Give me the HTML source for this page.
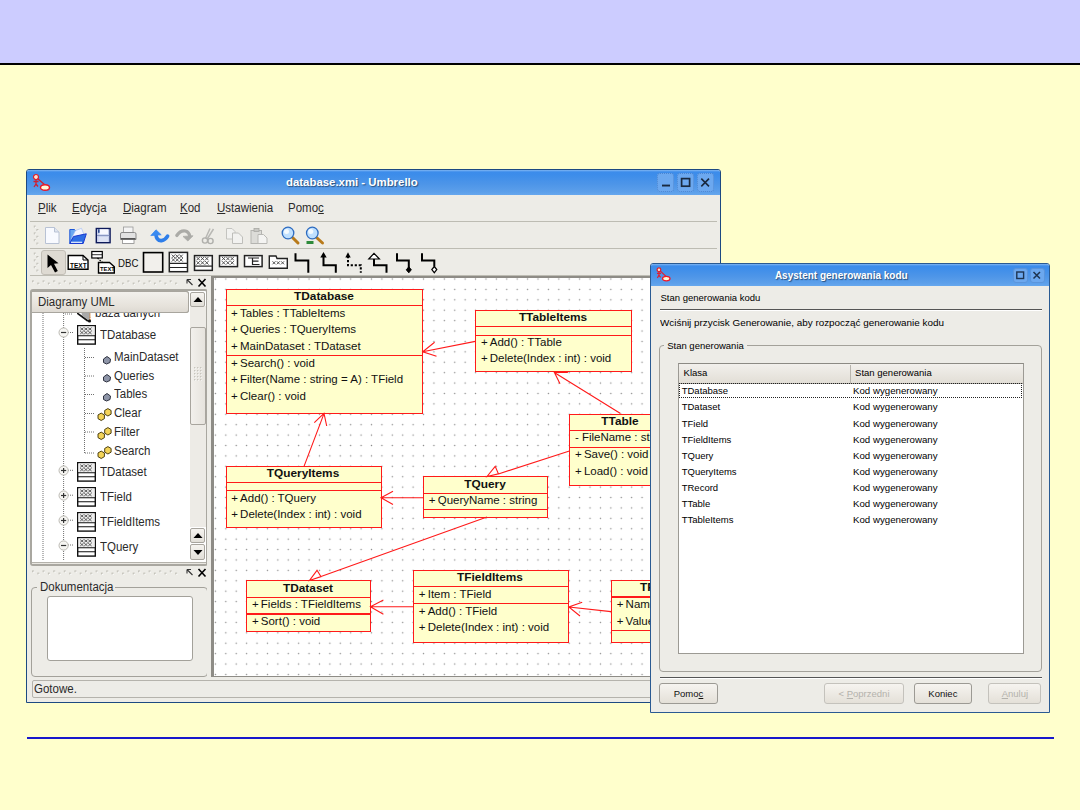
<!DOCTYPE html><html><head><meta charset="utf-8"><style>
*{margin:0;padding:0;box-sizing:border-box}
html,body{width:1080px;height:810px;overflow:hidden;background:#FFFFCC;font-family:"Liberation Sans",sans-serif;color:#000}
.a{position:absolute}
.tx{white-space:nowrap}
svg{position:absolute;overflow:visible}
</style></head><body>
<div class="a" style="left:0px;top:0px;width:1080px;height:63px;background:#CCCCFF"></div>
<div class="a" style="left:0px;top:63px;width:1080px;height:2px;background:#000"></div>
<div class="a" style="left:27px;top:737px;width:1027px;height:2px;background:#1818CC"></div>
<div class="a" style="left:26px;top:169px;width:695px;height:534px;background:#EDECE7;border:1px solid #1D4A82;border-radius:3px 3px 0 0"></div>
<div class="a" style="left:27px;top:170px;width:693px;height:25px;background:linear-gradient(#80B6F2 0,#3C8CEB 2px,#3D8DEA 5px,#4D95E8 14px,#5C9FEA 22px,#66A7EE 25px);border-radius:2px 2px 0 0"></div>
<div class="a tx" style="left:286.0px;top:176.9px;font-size:11.4px;line-height:1;color:#fff;font-weight:bold;text-shadow:1px 1px 1px #2A4F7A">database.xmi - Umbrello</div>
<div class="a" style="left:656.7px;top:173.3px;width:17.5px;height:18.5px;background:#6CA8EF;border:1px dotted #4A84D0;border-radius:3px"></div>
<div class="a" style="left:676.7px;top:173.3px;width:17.5px;height:18.5px;background:#6CA8EF;border:1px dotted #4A84D0;border-radius:3px"></div>
<div class="a" style="left:696.7px;top:173.3px;width:17.5px;height:18.5px;background:#6CA8EF;border:1px dotted #4A84D0;border-radius:3px"></div>
<svg style="left:650px;top:170px" width="70" height="25"><rect x="12" y="14.6" width="8" height="1.9" fill="#1A2A40"/><rect x="31.6" y="8.6" width="8" height="7.6" fill="none" stroke="#1A2A40" stroke-width="1.7"/><path d="M51.3 8.6 L59 16.4 M59 8.6 L51.3 16.4" stroke="#1A2A40" stroke-width="1.6"/></svg>
<svg style="left:33px;top:174px" width="20" height="20" viewBox="0 0 20 20"><g transform="scale(1.0)"><circle cx="3" cy="3" r="2.5" fill="#FFE0D0" stroke="#E0202A" stroke-width="1.2"/><path d="M3 5.5 V10 M0.5 7.5 H5.5 M3 10 L1 13 M3 10 L5 12.5 M4.5 4.5 L12 11" stroke="#D02030" stroke-width="1.3" fill="none"/><ellipse cx="12" cy="13.5" rx="4.5" ry="2.8" fill="#FFF8D8" stroke="#E81828" stroke-width="1.4"/></g></svg>
<div class="a tx" style="left:37.7px;top:202.0px;font-size:12.5px;line-height:1;color:#2A2A2A;transform:scaleX(0.92);transform-origin:0 0;"><u>P</u>lik</div>
<div class="a tx" style="left:72.4px;top:202.0px;font-size:12.5px;line-height:1;color:#2A2A2A;transform:scaleX(0.92);transform-origin:0 0;"><u>E</u>dycja</div>
<div class="a tx" style="left:122.7px;top:202.0px;font-size:12.5px;line-height:1;color:#2A2A2A;transform:scaleX(0.92);transform-origin:0 0;"><u>D</u>iagram</div>
<div class="a tx" style="left:180.4px;top:202.0px;font-size:12.5px;line-height:1;color:#2A2A2A;transform:scaleX(0.92);transform-origin:0 0;"><u>K</u>od</div>
<div class="a tx" style="left:216.7px;top:202.0px;font-size:12.5px;line-height:1;color:#2A2A2A;transform:scaleX(0.92);transform-origin:0 0;"><u>U</u>stawienia</div>
<div class="a tx" style="left:288.1px;top:202.0px;font-size:12.5px;line-height:1;color:#2A2A2A;transform:scaleX(0.92);transform-origin:0 0;">Pomo<u>c</u></div>
<div class="a" style="left:30px;top:221px;width:687px;height:1px;background:#BDBCB3"></div>
<div class="a" style="left:30px;top:248px;width:687px;height:1px;background:#BDBCB3"></div>
<div class="a" style="left:30px;top:275px;width:687px;height:1px;background:#BDBCB3"></div>
<svg style="left:33px;top:225px" width="7" height="22"><rect x="0.8" y="0.6" width="2" height="2" fill="#C2C0B8"/><rect x="1.8" y="1.6" width="1.3" height="1.3" fill="#FBFBFA"/><rect x="3.4000000000000004" y="4.0" width="2" height="2" fill="#C2C0B8"/><rect x="4.4" y="5.0" width="1.3" height="1.3" fill="#FBFBFA"/><rect x="0.8" y="7.3999999999999995" width="2" height="2" fill="#C2C0B8"/><rect x="1.8" y="8.4" width="1.3" height="1.3" fill="#FBFBFA"/><rect x="3.4000000000000004" y="10.799999999999999" width="2" height="2" fill="#C2C0B8"/><rect x="4.4" y="11.799999999999999" width="1.3" height="1.3" fill="#FBFBFA"/><rect x="0.8" y="14.2" width="2" height="2" fill="#C2C0B8"/><rect x="1.8" y="15.2" width="1.3" height="1.3" fill="#FBFBFA"/><rect x="3.4000000000000004" y="17.6" width="2" height="2" fill="#C2C0B8"/><rect x="4.4" y="18.6" width="1.3" height="1.3" fill="#FBFBFA"/></svg>
<svg style="left:33px;top:252px" width="7" height="22"><rect x="0.8" y="0.6" width="2" height="2" fill="#C2C0B8"/><rect x="1.8" y="1.6" width="1.3" height="1.3" fill="#FBFBFA"/><rect x="3.4000000000000004" y="4.0" width="2" height="2" fill="#C2C0B8"/><rect x="4.4" y="5.0" width="1.3" height="1.3" fill="#FBFBFA"/><rect x="0.8" y="7.3999999999999995" width="2" height="2" fill="#C2C0B8"/><rect x="1.8" y="8.4" width="1.3" height="1.3" fill="#FBFBFA"/><rect x="3.4000000000000004" y="10.799999999999999" width="2" height="2" fill="#C2C0B8"/><rect x="4.4" y="11.799999999999999" width="1.3" height="1.3" fill="#FBFBFA"/><rect x="0.8" y="14.2" width="2" height="2" fill="#C2C0B8"/><rect x="1.8" y="15.2" width="1.3" height="1.3" fill="#FBFBFA"/><rect x="3.4000000000000004" y="17.6" width="2" height="2" fill="#C2C0B8"/><rect x="4.4" y="18.6" width="1.3" height="1.3" fill="#FBFBFA"/></svg>
<svg style="left:0;top:0" width="1080" height="810"><path d="M45.5 227.5 H54.5 L59 232 V243.5 H45.5 Z" fill="#F8FAFF" stroke="#B8C2D4" stroke-width="1"/><path d="M54.5 227.5 V232 H59" fill="#E0E6F0" stroke="#B8C2D4" stroke-width="1"/><path d="M69.8 229.5 H74.5 L76 231 H79 V243.5 H69.8 Z" fill="#6AA8F0" stroke="#1E58D8" stroke-width="1"/><path d="M71.5 238.5 L75.5 230.5 L81.5 228.3 L84.5 236 Z" fill="#F4F6FF" stroke="#A8C0F0" stroke-width="0.7"/><path d="M69.8 243.5 L73.5 236.5 L86.3 233.8 L83.2 243.5 Z" fill="#2E6EE4" stroke="#1A3AD0" stroke-width="1"/><path d="M71 242.3 H82" stroke="#E8F0FF" stroke-width="1.2"/><rect x="96.3" y="228.5" width="13.8" height="14.2" fill="#C8D0EC" stroke="#0E1A5A" stroke-width="1.4"/><rect x="99.5" y="229.3" width="8.5" height="5" fill="#F8F8FF"/><rect x="98" y="229.3" width="1.6" height="3.5" fill="#2A4A90"/><path d="M97 235.5 H109.5" stroke="#7A88B8" stroke-width="0.8"/><rect x="98.5" y="237" width="9.5" height="5" fill="#DDE2F4"/><rect x="123.5" y="227" width="9.5" height="6" fill="#F4F4F4" stroke="#9A9A9A" stroke-width="0.8"/><path d="M120.5 234 Q120.5 232.5 122 232.5 H134.5 Q136 232.5 136 234 V239.5 H120.5 Z" fill="#E2E2E2" stroke="#8A8A8A" stroke-width="1"/><rect x="122.5" y="239.5" width="11.5" height="4" fill="#fff" stroke="#8A8A8A" stroke-width="0.8"/><rect x="121" y="238" width="14.5" height="1.6" fill="#555"/><path d="M155.8 234 Q156.5 241 161.5 240.6 Q165.5 240 167.6 236.2" fill="none" stroke="#2E7EEA" stroke-width="3.6" stroke-linecap="round"/><path d="M150.8 235.6 L156 229.8 L161.2 234.8 Z" fill="#3A8AF0" stroke="#3A8AF0" stroke-width="0.8" stroke-linejoin="round"/><path d="M176.8 235.5 Q180.5 230 185.5 231 Q189 232 189.8 236" fill="none" stroke="#ABABA7" stroke-width="3.2" stroke-linecap="round"/><path d="M183 236.4 L193 235.8 L187.8 241 Z" fill="#ABABA7" stroke="#ABABA7" stroke-width="0.8" stroke-linejoin="round"/><path d="M210 228.5 L205.5 238.5 M213.5 229 L207.5 238.5" stroke="#B8B8B4" stroke-width="1.5"/><circle cx="205" cy="240.5" r="2.6" fill="none" stroke="#B0B0AC" stroke-width="1.4"/><circle cx="210.5" cy="241" r="2.6" fill="none" stroke="#B0B0AC" stroke-width="1.4"/><path d="M226.5 228.5 H232 L235 231.5 V239 H226.5 Z" fill="#F2F2F0" stroke="#C4C4C0" stroke-width="1"/><path d="M232.5 233 H238.5 L242.5 237 V243.5 H232.5 Z" fill="#F2F2F0" stroke="#BEBEBA" stroke-width="1"/><rect x="251" y="230.5" width="10.5" height="13" fill="#DCDCD8" stroke="#B4B4B0" stroke-width="1"/><rect x="254" y="228.5" width="5" height="3" fill="#C8C8C4" stroke="#A8A8A4" stroke-width="0.8"/><path d="M258 234.5 H263.5 L267 238 V243.5 H258 Z" fill="#F4F4F2" stroke="#B8B8B4" stroke-width="1"/><path d="M292.5 237.5 L298 243" stroke="#B87A1A" stroke-width="3" stroke-linecap="round"/><circle cx="288" cy="233" r="5.8" fill="#BFE0FF" stroke="#2E6CC0" stroke-width="1.3"/><circle cx="286.5" cy="231.5" r="2.5" fill="#F4FAFF"/><path d="M316.5 237.5 L322.5 243" stroke="#B87A1A" stroke-width="3" stroke-linecap="round"/><circle cx="312.3" cy="233" r="5.8" fill="#BFE0FF" stroke="#2E6CC0" stroke-width="1.3"/><circle cx="310.8" cy="231.5" r="2.5" fill="#F4FAFF"/><rect x="306.5" y="241" width="7" height="3" fill="#2E8A3A"/></svg>
<div class="a" style="left:41px;top:250px;width:24.5px;height:24.5px;background:#DEDAD2;border:1px solid #C2BEB6;border-radius:3px"></div>
<svg style="left:0;top:0" width="1080" height="810"><path d="M47.5 254.5 L47.5 268 L51 265 L55 272.5 L57.8 271 L54 263.8 L58.5 263.2 Z" fill="#000"/><path d="M68.2 255.5 H83 L88 260 V269.2 H68.2 Z" fill="#fff" stroke="#000" stroke-width="1.4"/><path d="M83 255.5 V260 H88" fill="none" stroke="#000" stroke-width="1"/><text x="70" y="267.5" font-family="Liberation Sans" font-weight="bold" font-size="6.5" fill="#000">TEXT</text><rect x="91.8" y="251.5" width="10.5" height="6.5" fill="#fff" stroke="#000" stroke-width="1.2"/><path d="M92 254.7 H102" stroke="#000" stroke-width="0.8"/><path d="M97.5 258 L103 263" stroke="#000" stroke-width="1.2" stroke-dasharray="1.6 1.2"/><path d="M98.5 262.5 H109.5 L114.3 266.8 V273 H98.5 Z" fill="#fff" stroke="#000" stroke-width="1.4"/><text x="100" y="271.3" font-family="Liberation Sans" font-weight="bold" font-size="5.8" fill="#000">TEXT</text><rect x="143.5" y="252.6" width="19.2" height="19.4" fill="#F2F0EC" stroke="#000" stroke-width="1.6"/></svg>
<div class="a tx" style="left:118.0px;top:258.2px;font-size:10.5px;line-height:1;color:#111;transform:scaleX(0.92);transform-origin:0 0;">DBC</div>
<svg style="left:0;top:0" width="1080" height="810"><rect x="169.3" y="252.4" width="18.2" height="19.3" fill="#fff" stroke="#222" stroke-width="1.5"/><path d="M171.70000000000002 254.60000000000002 L175.1 258.0 M175.1 254.60000000000002 L171.70000000000002 258.0" stroke="#444" stroke-width="0.9"/><path d="M175.55 254.60000000000002 L178.95 258.0 M178.95 254.60000000000002 L175.55 258.0" stroke="#444" stroke-width="0.9"/><path d="M179.4 254.60000000000002 L182.79999999999998 258.0 M182.79999999999998 254.60000000000002 L179.4 258.0" stroke="#444" stroke-width="0.9"/><path d="M171.70000000000002 258.20000000000005 L175.1 261.6 M175.1 258.20000000000005 L171.70000000000002 261.6" stroke="#444" stroke-width="0.9"/><path d="M175.55 258.20000000000005 L178.95 261.6 M178.95 258.20000000000005 L175.55 261.6" stroke="#444" stroke-width="0.9"/><path d="M179.4 258.20000000000005 L182.79999999999998 261.6 M182.79999999999998 258.20000000000005 L179.4 261.6" stroke="#444" stroke-width="0.9"/><path d="M169.3 263.4 H187.5 M169.3 267.5 H187.5" stroke="#222" stroke-width="1.2"/><rect x="194.5" y="255.6" width="17.8" height="14.8" fill="#fff" stroke="#222" stroke-width="1.5"/><path d="M196.5 256.90000000000003 L199.89999999999998 260.3 M199.89999999999998 256.90000000000003 L196.5 260.3" stroke="#444" stroke-width="0.9"/><path d="M200.8 256.90000000000003 L204.2 260.3 M204.2 256.90000000000003 L200.8 260.3" stroke="#444" stroke-width="0.9"/><path d="M205.1 256.90000000000003 L208.49999999999997 260.3 M208.49999999999997 256.90000000000003 L205.1 260.3" stroke="#444" stroke-width="0.9"/><path d="M196.5 261.1 L199.89999999999998 264.5 M199.89999999999998 261.1 L196.5 264.5" stroke="#444" stroke-width="0.9"/><path d="M200.8 261.1 L204.2 264.5 M204.2 261.1 L200.8 264.5" stroke="#444" stroke-width="0.9"/><path d="M205.1 261.1 L208.49999999999997 264.5 M208.49999999999997 261.1 L205.1 264.5" stroke="#444" stroke-width="0.9"/><path d="M194.5 266.1 H212.3" stroke="#222" stroke-width="1.2"/><rect x="219.5" y="255.6" width="18" height="11" fill="#fff" stroke="#222" stroke-width="1.5"/><path d="M221.9 256.90000000000003 L225.29999999999998 260.3 M225.29999999999998 256.90000000000003 L221.9 260.3" stroke="#444" stroke-width="0.9"/><path d="M226.20000000000002 256.90000000000003 L229.6 260.3 M229.6 256.90000000000003 L226.20000000000002 260.3" stroke="#444" stroke-width="0.9"/><path d="M230.5 256.90000000000003 L233.89999999999998 260.3 M233.89999999999998 256.90000000000003 L230.5 260.3" stroke="#444" stroke-width="0.9"/><path d="M221.9 261.1 L225.29999999999998 264.5 M225.29999999999998 261.1 L221.9 264.5" stroke="#444" stroke-width="0.9"/><path d="M226.20000000000002 261.1 L229.6 264.5 M229.6 261.1 L226.20000000000002 264.5" stroke="#444" stroke-width="0.9"/><path d="M230.5 261.1 L233.89999999999998 264.5 M233.89999999999998 261.1 L230.5 264.5" stroke="#444" stroke-width="0.9"/><rect x="244.5" y="255.6" width="17.6" height="11" fill="#fff" stroke="#222" stroke-width="1.5"/><path d="M248 258 H259 M252.5 258 V264.5 H259.5 M252.5 261.2 H258.5" stroke="#222" stroke-width="1.2" fill="none"/><path d="M269.3 256 H276 L277 258.5 H287.3 V268.3 H269.3 Z" fill="#fff" stroke="#222" stroke-width="1.4"/><path d="M272.5 261.3 L275.5 264.3 M275.5 261.3 L272.5 264.3" stroke="#444" stroke-width="0.9"/><path d="M276.8 261.3 L279.8 264.3 M279.8 261.3 L276.8 264.3" stroke="#444" stroke-width="0.9"/><path d="M281.1 261.3 L284.1 264.3 M284.1 261.3 L281.1 264.3" stroke="#444" stroke-width="0.9"/></svg>
<svg style="left:0;top:0" width="1080" height="810"><path d="M295.5 253.3 V260.6 H308.3 V272.7" fill="none" stroke="#000" stroke-width="2"/><path d="M323.5 255.5 V265.3 H335.8 V272.7" fill="none" stroke="#000" stroke-width="2"/><path d="M320.3 257.5 L323.5 252 L326.7 257.5 Z" fill="#000"/><path d="M348 256 V265.3 H360.8 V272.7" fill="none" stroke="#000" stroke-width="2" stroke-dasharray="2.2 1.8"/><path d="M345.3 257.5 L348 252.3 L350.7 257.5 Z" fill="#000"/><path d="M374 259 V265.3 H386.5 V272.7" fill="none" stroke="#000" stroke-width="2"/><path d="M368.8 259 L374 253.3 L379.4 259 Z" fill="#fff" stroke="#000" stroke-width="1.2"/><path d="M397 253.3 V260.6 H408.8 V268" fill="none" stroke="#000" stroke-width="2"/><path d="M408.8 266.8 L411.3 269.8 L408.8 272.8 L406.3 269.8 Z" fill="#000" stroke="#000" stroke-width="1"/><path d="M422 253.3 V260.6 H434.3 V266.5" fill="none" stroke="#000" stroke-width="2"/><path d="M434.3 266.5 L436.8 269.6 L434.3 272.7 L431.8 269.6 Z" fill="#fff" stroke="#000" stroke-width="1.2"/></svg>
<svg style="left:32px;top:280px" width="150" height="6"><rect x="0.0" y="0.4" width="2" height="1.8" fill="#C4C2BA"/><rect x="1.1" y="1.5" width="1.3" height="1.3" fill="#FBFBFA"/><rect x="5.3" y="2.6" width="2" height="1.8" fill="#C4C2BA"/><rect x="6.4" y="3.7" width="1.3" height="1.3" fill="#FBFBFA"/><rect x="10.6" y="0.4" width="2" height="1.8" fill="#C4C2BA"/><rect x="11.7" y="1.5" width="1.3" height="1.3" fill="#FBFBFA"/><rect x="15.899999999999999" y="2.6" width="2" height="1.8" fill="#C4C2BA"/><rect x="17.0" y="3.7" width="1.3" height="1.3" fill="#FBFBFA"/><rect x="21.2" y="0.4" width="2" height="1.8" fill="#C4C2BA"/><rect x="22.3" y="1.5" width="1.3" height="1.3" fill="#FBFBFA"/><rect x="26.5" y="2.6" width="2" height="1.8" fill="#C4C2BA"/><rect x="27.6" y="3.7" width="1.3" height="1.3" fill="#FBFBFA"/><rect x="31.799999999999997" y="0.4" width="2" height="1.8" fill="#C4C2BA"/><rect x="32.9" y="1.5" width="1.3" height="1.3" fill="#FBFBFA"/><rect x="37.1" y="2.6" width="2" height="1.8" fill="#C4C2BA"/><rect x="38.2" y="3.7" width="1.3" height="1.3" fill="#FBFBFA"/><rect x="42.4" y="0.4" width="2" height="1.8" fill="#C4C2BA"/><rect x="43.5" y="1.5" width="1.3" height="1.3" fill="#FBFBFA"/><rect x="47.699999999999996" y="2.6" width="2" height="1.8" fill="#C4C2BA"/><rect x="48.8" y="3.7" width="1.3" height="1.3" fill="#FBFBFA"/><rect x="53.0" y="0.4" width="2" height="1.8" fill="#C4C2BA"/><rect x="54.1" y="1.5" width="1.3" height="1.3" fill="#FBFBFA"/><rect x="58.3" y="2.6" width="2" height="1.8" fill="#C4C2BA"/><rect x="59.4" y="3.7" width="1.3" height="1.3" fill="#FBFBFA"/><rect x="63.599999999999994" y="0.4" width="2" height="1.8" fill="#C4C2BA"/><rect x="64.69999999999999" y="1.5" width="1.3" height="1.3" fill="#FBFBFA"/><rect x="68.89999999999999" y="2.6" width="2" height="1.8" fill="#C4C2BA"/><rect x="69.99999999999999" y="3.7" width="1.3" height="1.3" fill="#FBFBFA"/><rect x="74.2" y="0.4" width="2" height="1.8" fill="#C4C2BA"/><rect x="75.3" y="1.5" width="1.3" height="1.3" fill="#FBFBFA"/><rect x="79.5" y="2.6" width="2" height="1.8" fill="#C4C2BA"/><rect x="80.6" y="3.7" width="1.3" height="1.3" fill="#FBFBFA"/><rect x="84.8" y="0.4" width="2" height="1.8" fill="#C4C2BA"/><rect x="85.89999999999999" y="1.5" width="1.3" height="1.3" fill="#FBFBFA"/><rect x="90.1" y="2.6" width="2" height="1.8" fill="#C4C2BA"/><rect x="91.19999999999999" y="3.7" width="1.3" height="1.3" fill="#FBFBFA"/><rect x="95.39999999999999" y="0.4" width="2" height="1.8" fill="#C4C2BA"/><rect x="96.49999999999999" y="1.5" width="1.3" height="1.3" fill="#FBFBFA"/><rect x="100.7" y="2.6" width="2" height="1.8" fill="#C4C2BA"/><rect x="101.8" y="3.7" width="1.3" height="1.3" fill="#FBFBFA"/><rect x="106.0" y="0.4" width="2" height="1.8" fill="#C4C2BA"/><rect x="107.1" y="1.5" width="1.3" height="1.3" fill="#FBFBFA"/><rect x="111.3" y="2.6" width="2" height="1.8" fill="#C4C2BA"/><rect x="112.39999999999999" y="3.7" width="1.3" height="1.3" fill="#FBFBFA"/><rect x="116.6" y="0.4" width="2" height="1.8" fill="#C4C2BA"/><rect x="117.69999999999999" y="1.5" width="1.3" height="1.3" fill="#FBFBFA"/><rect x="121.89999999999999" y="2.6" width="2" height="1.8" fill="#C4C2BA"/><rect x="122.99999999999999" y="3.7" width="1.3" height="1.3" fill="#FBFBFA"/><rect x="127.19999999999999" y="0.4" width="2" height="1.8" fill="#C4C2BA"/><rect x="128.29999999999998" y="1.5" width="1.3" height="1.3" fill="#FBFBFA"/><rect x="132.5" y="2.6" width="2" height="1.8" fill="#C4C2BA"/><rect x="133.6" y="3.7" width="1.3" height="1.3" fill="#FBFBFA"/><rect x="137.79999999999998" y="0.4" width="2" height="1.8" fill="#C4C2BA"/><rect x="138.89999999999998" y="1.5" width="1.3" height="1.3" fill="#FBFBFA"/><rect x="143.1" y="2.6" width="2" height="1.8" fill="#C4C2BA"/><rect x="144.2" y="3.7" width="1.3" height="1.3" fill="#FBFBFA"/></svg>
<svg style="left:184px;top:278px" width="24" height="10"><path d="M3 1.5 L8.5 7 M3 1.5 H7 M3 1.5 V5.5" stroke="#333" stroke-width="1.1" fill="none"/><path d="M14.5 1 L21.5 8.5 M21.5 1 L14.5 8.5" stroke="#000" stroke-width="1.6"/></svg>
<div class="a" style="left:30.3px;top:288.8px;width:177.7px;height:277.6px;background:#fff;border:2px solid #A9A7A0;border-radius:3px"></div>
<div class="a" style="left:32.3px;top:561.6px;width:173.7px;height:2.7px;background:#E8E6E0;border-top:1px solid #B4B2AB"></div>
<div class="a" style="left:190px;top:306px;width:16px;height:221px;background:#EDEBE6"></div>
<div class="a" style="left:190px;top:326.5px;width:16px;height:98px;background:linear-gradient(90deg,#F2F0EC,#E6E3DD);border:1px solid #A8A59E;border-radius:2px"></div>
<svg style="left:193px;top:366px" width="10" height="18"><rect x="1" y="1" width="1.5" height="1.5" fill="#C6C3BB"/><rect x="1.8" y="1.8" width="1" height="1" fill="#fff"/><rect x="4" y="1" width="1.5" height="1.5" fill="#C6C3BB"/><rect x="4.8" y="1.8" width="1" height="1" fill="#fff"/><rect x="7" y="1" width="1.5" height="1.5" fill="#C6C3BB"/><rect x="7.8" y="1.8" width="1" height="1" fill="#fff"/><rect x="1" y="4" width="1.5" height="1.5" fill="#C6C3BB"/><rect x="1.8" y="4.8" width="1" height="1" fill="#fff"/><rect x="4" y="4" width="1.5" height="1.5" fill="#C6C3BB"/><rect x="4.8" y="4.8" width="1" height="1" fill="#fff"/><rect x="7" y="4" width="1.5" height="1.5" fill="#C6C3BB"/><rect x="7.8" y="4.8" width="1" height="1" fill="#fff"/><rect x="1" y="7" width="1.5" height="1.5" fill="#C6C3BB"/><rect x="1.8" y="7.8" width="1" height="1" fill="#fff"/><rect x="4" y="7" width="1.5" height="1.5" fill="#C6C3BB"/><rect x="4.8" y="7.8" width="1" height="1" fill="#fff"/><rect x="7" y="7" width="1.5" height="1.5" fill="#C6C3BB"/><rect x="7.8" y="7.8" width="1" height="1" fill="#fff"/><rect x="1" y="10" width="1.5" height="1.5" fill="#C6C3BB"/><rect x="1.8" y="10.8" width="1" height="1" fill="#fff"/><rect x="4" y="10" width="1.5" height="1.5" fill="#C6C3BB"/><rect x="4.8" y="10.8" width="1" height="1" fill="#fff"/><rect x="7" y="10" width="1.5" height="1.5" fill="#C6C3BB"/><rect x="7.8" y="10.8" width="1" height="1" fill="#fff"/><rect x="1" y="13" width="1.5" height="1.5" fill="#C6C3BB"/><rect x="1.8" y="13.8" width="1" height="1" fill="#fff"/><rect x="4" y="13" width="1.5" height="1.5" fill="#C6C3BB"/><rect x="4.8" y="13.8" width="1" height="1" fill="#fff"/><rect x="7" y="13" width="1.5" height="1.5" fill="#C6C3BB"/><rect x="7.8" y="13.8" width="1" height="1" fill="#fff"/></svg>
<div class="a" style="left:190px;top:291.5px;width:15.3px;height:15.3px;background:linear-gradient(#F6F4F0,#E2DFD8);border:1px solid #A8A59E;border-radius:2px"></div>
<svg style="left:189.5px;top:291.5px" width="16" height="16"><path d="M3.5 10 L8 5 L12.5 10 Z" fill="#000"/></svg>
<div class="a" style="left:190px;top:527.5px;width:15.3px;height:15.3px;background:linear-gradient(#F6F4F0,#E2DFD8);border:1px solid #A8A59E;border-radius:2px"></div>
<svg style="left:189.5px;top:527.5px" width="16" height="16"><path d="M3.5 10 L8 5 L12.5 10 Z" fill="#000"/></svg>
<div class="a" style="left:190px;top:544.3px;width:15.3px;height:15.3px;background:linear-gradient(#F6F4F0,#E2DFD8);border:1px solid #A8A59E;border-radius:2px"></div>
<svg style="left:189.5px;top:544.3px" width="16" height="16"><path d="M3.5 6 L8 11 L12.5 6 Z" fill="#000"/></svg>
<div class="a" style="left:32.3px;top:291.3px;width:157px;height:21.5px;background:linear-gradient(#F2F0EC,#E6E2DB 70%,#DEDAD3);border:1px solid #A8A59E;border-left:none;border-radius:0 3px 3px 0"></div>
<div class="a tx" style="left:37.8px;top:296.0px;font-size:12.5px;line-height:1;color:#2A2A2A;transform:scaleX(0.92);transform-origin:0 0;">Diagramy UML</div>
<div class="a" style="left:33px;top:312.5px;width:156px;height:12px;overflow:hidden"><div class="a tx" style="left:61.5px;top:-5.6px;font-size:12.5px;line-height:1;color:#2A2A2A;transform:scaleX(.92);transform-origin:0 0">baza danych</div><svg style="left:42.5px;top:-3px" width="18" height="14"><path d="M1 2 L14.5 11.5 L11 11.5 L1 4 Z" fill="#111"/><path d="M5 0 H14 V11.5 L6 5.5 Z" fill="#A9A9A9"/><path d="M14 0 V11" stroke="#D07828" stroke-width="1.3" stroke-dasharray="1.2 1"/><circle cx="13.5" cy="11" r="1.6" fill="#111"/></svg></div>
<svg style="left:0;top:0" width="1080" height="810"><path d="M43 313 V561" stroke="#707070" stroke-width="1" stroke-dasharray="1 1"/><path d="M63.6 313 V561" stroke="#707070" stroke-width="1" stroke-dasharray="1 1"/><path d="M65 314 H73" stroke="#777" stroke-width="1.2" stroke-dasharray="1 1"/><path d="M84.5 348 V453.5" stroke="#707070" stroke-width="1" stroke-dasharray="1 1"/><path d="M85 357.5 H94" stroke="#707070" stroke-width="1" stroke-dasharray="1 1"/><path d="M85 376 H94" stroke="#707070" stroke-width="1" stroke-dasharray="1 1"/><path d="M85 394.5 H94" stroke="#707070" stroke-width="1" stroke-dasharray="1 1"/><path d="M85 413.5 H94" stroke="#707070" stroke-width="1" stroke-dasharray="1 1"/><path d="M85 432 H94" stroke="#707070" stroke-width="1" stroke-dasharray="1 1"/><path d="M85 453 H94" stroke="#707070" stroke-width="1" stroke-dasharray="1 1"/><path d="M68 332.5 H74" stroke="#707070" stroke-width="1" stroke-dasharray="1 1"/><path d="M68 470.3 H74" stroke="#707070" stroke-width="1" stroke-dasharray="1 1"/><path d="M68 495.2 H74" stroke="#707070" stroke-width="1" stroke-dasharray="1 1"/><path d="M68 520.2 H74" stroke="#707070" stroke-width="1" stroke-dasharray="1 1"/><path d="M68 545 H74" stroke="#707070" stroke-width="1" stroke-dasharray="1 1"/></svg>
<svg style="left:58px;top:327.0px" width="12" height="11"><circle cx="5.6" cy="5.5" r="4.6" fill="#F6F5F2" stroke="#BDBBB5" stroke-width="1"/><path d="M3 5.5 H8.2" stroke="#333" stroke-width="1.2"/></svg>
<svg style="left:76.5px;top:324.5px" width="20" height="20"><rect x="0.7" y="0.7" width="17.6" height="18.4" fill="#fff" stroke="#111" stroke-width="1.4"/><rect x="1.4" y="1.4" width="16.2" height="9" fill="#EDEDED"/><path d="M3.2 2.6 l3.4 2.8 m0 -2.8 l-3.4 2.8" stroke="#555" stroke-width="0.9"/><path d="M7.2 2.6 l3.4 2.8 m0 -2.8 l-3.4 2.8" stroke="#555" stroke-width="0.9"/><path d="M11.2 2.6 l3.4 2.8 m0 -2.8 l-3.4 2.8" stroke="#555" stroke-width="0.9"/><path d="M3.2 6.2 l3.4 2.8 m0 -2.8 l-3.4 2.8" stroke="#555" stroke-width="0.9"/><path d="M7.2 6.2 l3.4 2.8 m0 -2.8 l-3.4 2.8" stroke="#555" stroke-width="0.9"/><path d="M11.2 6.2 l3.4 2.8 m0 -2.8 l-3.4 2.8" stroke="#555" stroke-width="0.9"/><path d="M0.7 10.8 H18.3 M0.7 14.8 H18.3" stroke="#111" stroke-width="1.1"/></svg>
<div class="a tx" style="left:99.8px;top:329.0px;font-size:12.5px;line-height:1;color:#2A2A2A;transform:scaleX(0.92);transform-origin:0 0;">TDatabase</div>
<svg style="left:58px;top:464.8px" width="12" height="11"><circle cx="5.6" cy="5.5" r="4.6" fill="#F6F5F2" stroke="#BDBBB5" stroke-width="1"/><path d="M3 5.5 H8.2" stroke="#333" stroke-width="1.2"/><path d="M5.6 3 V8" stroke="#333" stroke-width="1.2"/></svg>
<svg style="left:76.5px;top:462.3px" width="20" height="20"><rect x="0.7" y="0.7" width="17.6" height="18.4" fill="#fff" stroke="#111" stroke-width="1.4"/><rect x="1.4" y="1.4" width="16.2" height="9" fill="#EDEDED"/><path d="M3.2 2.6 l3.4 2.8 m0 -2.8 l-3.4 2.8" stroke="#555" stroke-width="0.9"/><path d="M7.2 2.6 l3.4 2.8 m0 -2.8 l-3.4 2.8" stroke="#555" stroke-width="0.9"/><path d="M11.2 2.6 l3.4 2.8 m0 -2.8 l-3.4 2.8" stroke="#555" stroke-width="0.9"/><path d="M3.2 6.2 l3.4 2.8 m0 -2.8 l-3.4 2.8" stroke="#555" stroke-width="0.9"/><path d="M7.2 6.2 l3.4 2.8 m0 -2.8 l-3.4 2.8" stroke="#555" stroke-width="0.9"/><path d="M11.2 6.2 l3.4 2.8 m0 -2.8 l-3.4 2.8" stroke="#555" stroke-width="0.9"/><path d="M0.7 10.8 H18.3 M0.7 14.8 H18.3" stroke="#111" stroke-width="1.1"/></svg>
<div class="a tx" style="left:99.8px;top:466.3px;font-size:12.5px;line-height:1;color:#2A2A2A;transform:scaleX(0.92);transform-origin:0 0;">TDataset</div>
<svg style="left:58px;top:489.7px" width="12" height="11"><circle cx="5.6" cy="5.5" r="4.6" fill="#F6F5F2" stroke="#BDBBB5" stroke-width="1"/><path d="M3 5.5 H8.2" stroke="#333" stroke-width="1.2"/><path d="M5.6 3 V8" stroke="#333" stroke-width="1.2"/></svg>
<svg style="left:76.5px;top:487.2px" width="20" height="20"><rect x="0.7" y="0.7" width="17.6" height="18.4" fill="#fff" stroke="#111" stroke-width="1.4"/><rect x="1.4" y="1.4" width="16.2" height="9" fill="#EDEDED"/><path d="M3.2 2.6 l3.4 2.8 m0 -2.8 l-3.4 2.8" stroke="#555" stroke-width="0.9"/><path d="M7.2 2.6 l3.4 2.8 m0 -2.8 l-3.4 2.8" stroke="#555" stroke-width="0.9"/><path d="M11.2 2.6 l3.4 2.8 m0 -2.8 l-3.4 2.8" stroke="#555" stroke-width="0.9"/><path d="M3.2 6.2 l3.4 2.8 m0 -2.8 l-3.4 2.8" stroke="#555" stroke-width="0.9"/><path d="M7.2 6.2 l3.4 2.8 m0 -2.8 l-3.4 2.8" stroke="#555" stroke-width="0.9"/><path d="M11.2 6.2 l3.4 2.8 m0 -2.8 l-3.4 2.8" stroke="#555" stroke-width="0.9"/><path d="M0.7 10.8 H18.3 M0.7 14.8 H18.3" stroke="#111" stroke-width="1.1"/></svg>
<div class="a tx" style="left:99.8px;top:491.1px;font-size:12.5px;line-height:1;color:#2A2A2A;transform:scaleX(0.92);transform-origin:0 0;">TField</div>
<svg style="left:58px;top:514.7px" width="12" height="11"><circle cx="5.6" cy="5.5" r="4.6" fill="#F6F5F2" stroke="#BDBBB5" stroke-width="1"/><path d="M3 5.5 H8.2" stroke="#333" stroke-width="1.2"/><path d="M5.6 3 V8" stroke="#333" stroke-width="1.2"/></svg>
<svg style="left:76.5px;top:512.2px" width="20" height="20"><rect x="0.7" y="0.7" width="17.6" height="18.4" fill="#fff" stroke="#111" stroke-width="1.4"/><rect x="1.4" y="1.4" width="16.2" height="9" fill="#EDEDED"/><path d="M3.2 2.6 l3.4 2.8 m0 -2.8 l-3.4 2.8" stroke="#555" stroke-width="0.9"/><path d="M7.2 2.6 l3.4 2.8 m0 -2.8 l-3.4 2.8" stroke="#555" stroke-width="0.9"/><path d="M11.2 2.6 l3.4 2.8 m0 -2.8 l-3.4 2.8" stroke="#555" stroke-width="0.9"/><path d="M3.2 6.2 l3.4 2.8 m0 -2.8 l-3.4 2.8" stroke="#555" stroke-width="0.9"/><path d="M7.2 6.2 l3.4 2.8 m0 -2.8 l-3.4 2.8" stroke="#555" stroke-width="0.9"/><path d="M11.2 6.2 l3.4 2.8 m0 -2.8 l-3.4 2.8" stroke="#555" stroke-width="0.9"/><path d="M0.7 10.8 H18.3 M0.7 14.8 H18.3" stroke="#111" stroke-width="1.1"/></svg>
<div class="a tx" style="left:99.8px;top:516.2px;font-size:12.5px;line-height:1;color:#2A2A2A;transform:scaleX(0.92);transform-origin:0 0;">TFieldItems</div>
<svg style="left:58px;top:539.5px" width="12" height="11"><circle cx="5.6" cy="5.5" r="4.6" fill="#F6F5F2" stroke="#BDBBB5" stroke-width="1"/><path d="M3 5.5 H8.2" stroke="#333" stroke-width="1.2"/></svg>
<svg style="left:76.5px;top:537px" width="20" height="20"><rect x="0.7" y="0.7" width="17.6" height="18.4" fill="#fff" stroke="#111" stroke-width="1.4"/><rect x="1.4" y="1.4" width="16.2" height="9" fill="#EDEDED"/><path d="M3.2 2.6 l3.4 2.8 m0 -2.8 l-3.4 2.8" stroke="#555" stroke-width="0.9"/><path d="M7.2 2.6 l3.4 2.8 m0 -2.8 l-3.4 2.8" stroke="#555" stroke-width="0.9"/><path d="M11.2 2.6 l3.4 2.8 m0 -2.8 l-3.4 2.8" stroke="#555" stroke-width="0.9"/><path d="M3.2 6.2 l3.4 2.8 m0 -2.8 l-3.4 2.8" stroke="#555" stroke-width="0.9"/><path d="M7.2 6.2 l3.4 2.8 m0 -2.8 l-3.4 2.8" stroke="#555" stroke-width="0.9"/><path d="M11.2 6.2 l3.4 2.8 m0 -2.8 l-3.4 2.8" stroke="#555" stroke-width="0.9"/><path d="M0.7 10.8 H18.3 M0.7 14.8 H18.3" stroke="#111" stroke-width="1.1"/></svg>
<div class="a tx" style="left:99.8px;top:540.9px;font-size:12.5px;line-height:1;color:#2A2A2A;transform:scaleX(0.92);transform-origin:0 0;">TQuery</div>
<svg style="left:101.5px;top:354.5px" width="10" height="10"><path d="M1.5 4 L5 1.5 L8.5 4 L8 7.5 L4.5 9 L1.5 7.5 Z" fill="#8E95A8" stroke="#2E3240" stroke-width="1"/></svg>
<div class="a tx" style="left:114.3px;top:351.0px;font-size:12.5px;line-height:1;color:#2A2A2A;transform:scaleX(0.92);transform-origin:0 0;">MainDataset</div>
<svg style="left:101.5px;top:373px" width="10" height="10"><path d="M1.5 4 L5 1.5 L8.5 4 L8 7.5 L4.5 9 L1.5 7.5 Z" fill="#8E95A8" stroke="#2E3240" stroke-width="1"/></svg>
<div class="a tx" style="left:114.3px;top:369.5px;font-size:12.5px;line-height:1;color:#2A2A2A;transform:scaleX(0.92);transform-origin:0 0;">Queries</div>
<svg style="left:101.5px;top:391.5px" width="10" height="10"><path d="M1.5 4 L5 1.5 L8.5 4 L8 7.5 L4.5 9 L1.5 7.5 Z" fill="#8E95A8" stroke="#2E3240" stroke-width="1"/></svg>
<div class="a tx" style="left:114.3px;top:388.1px;font-size:12.5px;line-height:1;color:#2A2A2A;transform:scaleX(0.92);transform-origin:0 0;">Tables</div>
<svg style="left:96.5px;top:407.2px" width="18" height="16"><polygon points="7.40,11.65 4.20,13.50 1.00,11.65 1.00,7.95 4.20,6.10 7.40,7.95" fill="#F4D458" stroke="#3A2E00" stroke-width="0.9"/><polygon points="14.10,7.15 10.90,9.00 7.70,7.15 7.70,3.45 10.90,1.60 14.10,3.45" fill="#F4D458" stroke="#3A2E00" stroke-width="0.9"/></svg>
<div class="a tx" style="left:114.3px;top:407.0px;font-size:12.5px;line-height:1;color:#2A2A2A;transform:scaleX(0.92);transform-origin:0 0;">Clear</div>
<svg style="left:96.5px;top:425.7px" width="18" height="16"><polygon points="7.40,11.65 4.20,13.50 1.00,11.65 1.00,7.95 4.20,6.10 7.40,7.95" fill="#F4D458" stroke="#3A2E00" stroke-width="0.9"/><polygon points="14.10,7.15 10.90,9.00 7.70,7.15 7.70,3.45 10.90,1.60 14.10,3.45" fill="#F4D458" stroke="#3A2E00" stroke-width="0.9"/></svg>
<div class="a tx" style="left:114.3px;top:425.5px;font-size:12.5px;line-height:1;color:#2A2A2A;transform:scaleX(0.92);transform-origin:0 0;">Filter</div>
<svg style="left:96.5px;top:444.7px" width="18" height="16"><polygon points="7.40,11.65 4.20,13.50 1.00,11.65 1.00,7.95 4.20,6.10 7.40,7.95" fill="#F4D458" stroke="#3A2E00" stroke-width="0.9"/><polygon points="14.10,7.15 10.90,9.00 7.70,7.15 7.70,3.45 10.90,1.60 14.10,3.45" fill="#F4D458" stroke="#3A2E00" stroke-width="0.9"/></svg>
<div class="a tx" style="left:114.3px;top:444.5px;font-size:12.5px;line-height:1;color:#2A2A2A;transform:scaleX(0.92);transform-origin:0 0;">Search</div>
<div class="a" style="left:32.3px;top:291.3px;width:157px;height:21.5px;background:linear-gradient(#F2F0EC,#E6E2DB 70%,#DEDAD3);border:1px solid #A8A59E;border-left:none;border-radius:0 3px 3px 0"></div>
<div class="a tx" style="left:37.8px;top:296.0px;font-size:12.5px;line-height:1;color:#2A2A2A;transform:scaleX(0.92);transform-origin:0 0;">Diagramy UML</div>
<svg style="left:32px;top:570px" width="150" height="6"><rect x="0.0" y="0.4" width="2" height="1.8" fill="#C4C2BA"/><rect x="1.1" y="1.5" width="1.3" height="1.3" fill="#FBFBFA"/><rect x="5.3" y="2.6" width="2" height="1.8" fill="#C4C2BA"/><rect x="6.4" y="3.7" width="1.3" height="1.3" fill="#FBFBFA"/><rect x="10.6" y="0.4" width="2" height="1.8" fill="#C4C2BA"/><rect x="11.7" y="1.5" width="1.3" height="1.3" fill="#FBFBFA"/><rect x="15.899999999999999" y="2.6" width="2" height="1.8" fill="#C4C2BA"/><rect x="17.0" y="3.7" width="1.3" height="1.3" fill="#FBFBFA"/><rect x="21.2" y="0.4" width="2" height="1.8" fill="#C4C2BA"/><rect x="22.3" y="1.5" width="1.3" height="1.3" fill="#FBFBFA"/><rect x="26.5" y="2.6" width="2" height="1.8" fill="#C4C2BA"/><rect x="27.6" y="3.7" width="1.3" height="1.3" fill="#FBFBFA"/><rect x="31.799999999999997" y="0.4" width="2" height="1.8" fill="#C4C2BA"/><rect x="32.9" y="1.5" width="1.3" height="1.3" fill="#FBFBFA"/><rect x="37.1" y="2.6" width="2" height="1.8" fill="#C4C2BA"/><rect x="38.2" y="3.7" width="1.3" height="1.3" fill="#FBFBFA"/><rect x="42.4" y="0.4" width="2" height="1.8" fill="#C4C2BA"/><rect x="43.5" y="1.5" width="1.3" height="1.3" fill="#FBFBFA"/><rect x="47.699999999999996" y="2.6" width="2" height="1.8" fill="#C4C2BA"/><rect x="48.8" y="3.7" width="1.3" height="1.3" fill="#FBFBFA"/><rect x="53.0" y="0.4" width="2" height="1.8" fill="#C4C2BA"/><rect x="54.1" y="1.5" width="1.3" height="1.3" fill="#FBFBFA"/><rect x="58.3" y="2.6" width="2" height="1.8" fill="#C4C2BA"/><rect x="59.4" y="3.7" width="1.3" height="1.3" fill="#FBFBFA"/><rect x="63.599999999999994" y="0.4" width="2" height="1.8" fill="#C4C2BA"/><rect x="64.69999999999999" y="1.5" width="1.3" height="1.3" fill="#FBFBFA"/><rect x="68.89999999999999" y="2.6" width="2" height="1.8" fill="#C4C2BA"/><rect x="69.99999999999999" y="3.7" width="1.3" height="1.3" fill="#FBFBFA"/><rect x="74.2" y="0.4" width="2" height="1.8" fill="#C4C2BA"/><rect x="75.3" y="1.5" width="1.3" height="1.3" fill="#FBFBFA"/><rect x="79.5" y="2.6" width="2" height="1.8" fill="#C4C2BA"/><rect x="80.6" y="3.7" width="1.3" height="1.3" fill="#FBFBFA"/><rect x="84.8" y="0.4" width="2" height="1.8" fill="#C4C2BA"/><rect x="85.89999999999999" y="1.5" width="1.3" height="1.3" fill="#FBFBFA"/><rect x="90.1" y="2.6" width="2" height="1.8" fill="#C4C2BA"/><rect x="91.19999999999999" y="3.7" width="1.3" height="1.3" fill="#FBFBFA"/><rect x="95.39999999999999" y="0.4" width="2" height="1.8" fill="#C4C2BA"/><rect x="96.49999999999999" y="1.5" width="1.3" height="1.3" fill="#FBFBFA"/><rect x="100.7" y="2.6" width="2" height="1.8" fill="#C4C2BA"/><rect x="101.8" y="3.7" width="1.3" height="1.3" fill="#FBFBFA"/><rect x="106.0" y="0.4" width="2" height="1.8" fill="#C4C2BA"/><rect x="107.1" y="1.5" width="1.3" height="1.3" fill="#FBFBFA"/><rect x="111.3" y="2.6" width="2" height="1.8" fill="#C4C2BA"/><rect x="112.39999999999999" y="3.7" width="1.3" height="1.3" fill="#FBFBFA"/><rect x="116.6" y="0.4" width="2" height="1.8" fill="#C4C2BA"/><rect x="117.69999999999999" y="1.5" width="1.3" height="1.3" fill="#FBFBFA"/><rect x="121.89999999999999" y="2.6" width="2" height="1.8" fill="#C4C2BA"/><rect x="122.99999999999999" y="3.7" width="1.3" height="1.3" fill="#FBFBFA"/><rect x="127.19999999999999" y="0.4" width="2" height="1.8" fill="#C4C2BA"/><rect x="128.29999999999998" y="1.5" width="1.3" height="1.3" fill="#FBFBFA"/><rect x="132.5" y="2.6" width="2" height="1.8" fill="#C4C2BA"/><rect x="133.6" y="3.7" width="1.3" height="1.3" fill="#FBFBFA"/><rect x="137.79999999999998" y="0.4" width="2" height="1.8" fill="#C4C2BA"/><rect x="138.89999999999998" y="1.5" width="1.3" height="1.3" fill="#FBFBFA"/><rect x="143.1" y="2.6" width="2" height="1.8" fill="#C4C2BA"/><rect x="144.2" y="3.7" width="1.3" height="1.3" fill="#FBFBFA"/></svg>
<svg style="left:184px;top:568px" width="24" height="10"><path d="M3 1.5 L8.5 7 M3 1.5 H7 M3 1.5 V5.5" stroke="#333" stroke-width="1.1" fill="none"/><path d="M14.5 1 L21.5 8.5 M21.5 1 L14.5 8.5" stroke="#000" stroke-width="1.6"/></svg>
<div class="a" style="left:30.5px;top:586.5px;width:177px;height:90px;border:1px solid #A3A19A;border-radius:4px"></div>
<div class="a" style="left:37px;top:582px;width:78px;height:9px;background:#EDECE7"></div>
<div class="a tx" style="left:39.8px;top:580.8px;font-size:12.5px;line-height:1;color:#2A2A2A;transform:scaleX(0.92);transform-origin:0 0;">Dokumentacja</div>
<div class="a" style="left:46.5px;top:595.5px;width:146px;height:65px;background:#fff;border:1px solid #A3A19A;border-radius:3px"></div>
<div class="a" style="left:32.3px;top:680px;width:689px;height:17.5px;border:1px solid #B5B3AC;border-radius:2px"></div>
<div class="a tx" style="left:33.8px;top:682.6px;font-size:12.5px;line-height:1;color:#2A2A2A;transform:scaleX(0.92);transform-origin:0 0;">Gotowe.</div>
<div class="a" style="left:207px;top:277px;width:4px;height:400px;background:#EDECE7"></div>
<div class="a" style="left:211px;top:276px;width:3px;height:401px;background:#8E8C86"></div>
<div class="a" style="left:211px;top:276px;width:509px;height:2px;background:#8E8C86"></div>
<div class="a" style="left:214px;top:278px;width:506px;height:398px;background-color:#fff;background-image:radial-gradient(circle,#8C8C8C 0.5px,transparent 1.05px);background-size:10.42px 10.42px;background-position:6.61px 6.21px"></div>
<div class="a" style="left:214px;top:676px;width:506px;height:1px;background:#8E8C86"></div>
<div class="a" style="left:213.5px;top:277px;width:436.5px;height:399px;overflow:hidden">
<div class="a" style="left:-213.5px;top:-277px;width:1080px;height:810px">
<div class="a" style="left:225.5px;top:289px;width:197.8px;height:124.90000000000002px;background:#FFFFCC;border:1.2px solid #FF1A1A"></div>
<div class="a" style="left:225.5px;top:304.9px;width:197.8px;height:1.2px;background:#FF1A1A"></div>
<div class="a" style="left:225.5px;top:354.59999999999997px;width:197.8px;height:1.2px;background:#FF1A1A"></div>
<div class="a tx" style="left:323.5px;top:290.9px;font-size:11.4px;line-height:1;color:#111;font-weight:bold;transform:scaleX(1.04);transform-origin:50% 0;width:0;display:flex;justify-content:center;"><span>TDatabase</span></div>
<div class="a tx" style="left:231.1px;top:307.7px;font-size:11.5px;line-height:1;color:#111;">+</div>
<div class="a tx" style="left:240.0px;top:307.7px;font-size:11.5px;line-height:1;color:#111;">Tables : TTableItems</div>
<div class="a tx" style="left:231.1px;top:324.3px;font-size:11.5px;line-height:1;color:#111;">+</div>
<div class="a tx" style="left:240.0px;top:324.3px;font-size:11.5px;line-height:1;color:#111;">Queries : TQueryItems</div>
<div class="a tx" style="left:231.1px;top:340.9px;font-size:11.5px;line-height:1;color:#111;">+</div>
<div class="a tx" style="left:240.0px;top:340.9px;font-size:11.5px;line-height:1;color:#111;">MainDataset : TDataset</div>
<div class="a tx" style="left:231.1px;top:357.5px;font-size:11.5px;line-height:1;color:#111;">+</div>
<div class="a tx" style="left:240.0px;top:357.5px;font-size:11.5px;line-height:1;color:#111;">Search() : void</div>
<div class="a tx" style="left:231.1px;top:374.3px;font-size:11.5px;line-height:1;color:#111;">+</div>
<div class="a tx" style="left:240.0px;top:374.3px;font-size:11.5px;line-height:1;color:#111;">Filter(Name : string = A) : TField</div>
<div class="a tx" style="left:231.1px;top:390.9px;font-size:11.5px;line-height:1;color:#111;">+</div>
<div class="a tx" style="left:240.0px;top:390.9px;font-size:11.5px;line-height:1;color:#111;">Clear() : void</div>
<div class="a" style="left:475.3px;top:309.8px;width:156.5px;height:61.999999999999986px;background:#FFFFCC;border:1.2px solid #FF1A1A"></div>
<div class="a" style="left:475.3px;top:325.7px;width:156.5px;height:1.2px;background:#FF1A1A"></div>
<div class="a" style="left:475.3px;top:334.59999999999997px;width:156.5px;height:1.2px;background:#FF1A1A"></div>
<div class="a tx" style="left:552.6px;top:312.0px;font-size:11.4px;line-height:1;color:#111;font-weight:bold;transform:scaleX(1.04);transform-origin:50% 0;width:0;display:flex;justify-content:center;"><span>TTableItems</span></div>
<div class="a tx" style="left:480.9px;top:336.7px;font-size:11.5px;line-height:1;color:#111;">+</div>
<div class="a tx" style="left:489.8px;top:336.7px;font-size:11.5px;line-height:1;color:#111;">Add() : TTable</div>
<div class="a tx" style="left:480.9px;top:353.2px;font-size:11.5px;line-height:1;color:#111;">+</div>
<div class="a tx" style="left:489.8px;top:353.2px;font-size:11.5px;line-height:1;color:#111;">Delete(Index : int) : void</div>
<div class="a" style="left:569.4px;top:414px;width:102.00000000000004px;height:72.19999999999997px;background:#FFFFCC;border:1.2px solid #FF1A1A"></div>
<div class="a" style="left:569.4px;top:429.59999999999997px;width:102.00000000000004px;height:1.2px;background:#FF1A1A"></div>
<div class="a" style="left:569.4px;top:446.7px;width:102.00000000000004px;height:1.2px;background:#FF1A1A"></div>
<div class="a tx" style="left:619.5px;top:416.1px;font-size:11.4px;line-height:1;color:#111;font-weight:bold;transform:scaleX(1.04);transform-origin:50% 0;width:0;display:flex;justify-content:center;"><span>TTable</span></div>
<div class="a tx" style="left:575.0px;top:432.1px;font-size:11.5px;line-height:1;color:#111;">-</div>
<div class="a tx" style="left:581.9px;top:432.1px;font-size:11.5px;line-height:1;color:#111;">FileName : string</div>
<div class="a tx" style="left:575.0px;top:449.1px;font-size:11.5px;line-height:1;color:#111;">+</div>
<div class="a tx" style="left:583.9px;top:449.1px;font-size:11.5px;line-height:1;color:#111;">Save() : void</div>
<div class="a tx" style="left:575.0px;top:465.8px;font-size:11.5px;line-height:1;color:#111;">+</div>
<div class="a tx" style="left:583.9px;top:465.8px;font-size:11.5px;line-height:1;color:#111;">Load() : void</div>
<div class="a" style="left:225.6px;top:466.4px;width:156.00000000000003px;height:61.40000000000002px;background:#FFFFCC;border:1.2px solid #FF1A1A"></div>
<div class="a" style="left:225.6px;top:482.0px;width:156.00000000000003px;height:1.2px;background:#FF1A1A"></div>
<div class="a" style="left:225.6px;top:490.09999999999997px;width:156.00000000000003px;height:1.2px;background:#FF1A1A"></div>
<div class="a tx" style="left:302.7px;top:467.9px;font-size:11.4px;line-height:1;color:#111;font-weight:bold;transform:scaleX(1.04);transform-origin:50% 0;width:0;display:flex;justify-content:center;"><span>TQueryItems</span></div>
<div class="a tx" style="left:231.2px;top:493.1px;font-size:11.5px;line-height:1;color:#111;">+</div>
<div class="a tx" style="left:240.1px;top:493.1px;font-size:11.5px;line-height:1;color:#111;">Add() : TQuery</div>
<div class="a tx" style="left:231.2px;top:509.4px;font-size:11.5px;line-height:1;color:#111;">+</div>
<div class="a tx" style="left:240.1px;top:509.4px;font-size:11.5px;line-height:1;color:#111;">Delete(Index : int) : void</div>
<div class="a" style="left:423.2px;top:476px;width:125.30000000000005px;height:41.699999999999974px;background:#FFFFCC;border:1.2px solid #FF1A1A"></div>
<div class="a" style="left:423.2px;top:492.79999999999995px;width:125.30000000000005px;height:1.2px;background:#FF1A1A"></div>
<div class="a" style="left:423.2px;top:509.09999999999997px;width:125.30000000000005px;height:1.2px;background:#FF1A1A"></div>
<div class="a tx" style="left:485.0px;top:478.6px;font-size:11.4px;line-height:1;color:#111;font-weight:bold;transform:scaleX(1.04);transform-origin:50% 0;width:0;display:flex;justify-content:center;"><span>TQuery</span></div>
<div class="a tx" style="left:428.8px;top:494.8px;font-size:11.5px;line-height:1;color:#111;">+</div>
<div class="a tx" style="left:437.7px;top:494.8px;font-size:11.5px;line-height:1;color:#111;">QueryName : string</div>
<div class="a" style="left:246.3px;top:580.2px;width:124.89999999999996px;height:51.899999999999906px;background:#FFFFCC;border:1.2px solid #FF1A1A"></div>
<div class="a" style="left:246.3px;top:596.6px;width:124.89999999999996px;height:1.2px;background:#FF1A1A"></div>
<div class="a" style="left:246.3px;top:613.4px;width:124.89999999999996px;height:1.2px;background:#FF1A1A"></div>
<div class="a tx" style="left:307.9px;top:582.5px;font-size:11.4px;line-height:1;color:#111;font-weight:bold;transform:scaleX(1.04);transform-origin:50% 0;width:0;display:flex;justify-content:center;"><span>TDataset</span></div>
<div class="a tx" style="left:251.9px;top:598.7px;font-size:11.5px;line-height:1;color:#111;">+</div>
<div class="a tx" style="left:260.8px;top:598.7px;font-size:11.5px;line-height:1;color:#111;">Fields : TFieldItems</div>
<div class="a tx" style="left:251.9px;top:615.7px;font-size:11.5px;line-height:1;color:#111;">+</div>
<div class="a tx" style="left:260.8px;top:615.7px;font-size:11.5px;line-height:1;color:#111;">Sort() : void</div>
<div class="a" style="left:413.2px;top:570.2px;width:156.0px;height:72.3999999999999px;background:#FFFFCC;border:1.2px solid #FF1A1A"></div>
<div class="a" style="left:413.2px;top:585.6px;width:156.0px;height:1.2px;background:#FF1A1A"></div>
<div class="a" style="left:413.2px;top:602.6px;width:156.0px;height:1.2px;background:#FF1A1A"></div>
<div class="a tx" style="left:490.3px;top:571.7px;font-size:11.4px;line-height:1;color:#111;font-weight:bold;transform:scaleX(1.04);transform-origin:50% 0;width:0;display:flex;justify-content:center;"><span>TFieldItems</span></div>
<div class="a tx" style="left:418.8px;top:589.2px;font-size:11.5px;line-height:1;color:#111;">+</div>
<div class="a tx" style="left:427.7px;top:589.2px;font-size:11.5px;line-height:1;color:#111;">Item : TField</div>
<div class="a tx" style="left:418.8px;top:605.6px;font-size:11.5px;line-height:1;color:#111;">+</div>
<div class="a tx" style="left:427.7px;top:605.6px;font-size:11.5px;line-height:1;color:#111;">Add() : TField</div>
<div class="a tx" style="left:418.8px;top:621.8px;font-size:11.5px;line-height:1;color:#111;">+</div>
<div class="a tx" style="left:427.7px;top:621.8px;font-size:11.5px;line-height:1;color:#111;">Delete(Index : int) : void</div>
<div class="a" style="left:611.1px;top:580.4px;width:106.69999999999997px;height:62.199999999999974px;background:#FFFFCC;border:1.2px solid #FF1A1A"></div>
<div class="a" style="left:611.1px;top:596.4px;width:106.69999999999997px;height:1.2px;background:#FF1A1A"></div>
<div class="a" style="left:611.1px;top:629.6999999999999px;width:106.69999999999997px;height:1.2px;background:#FF1A1A"></div>
<div class="a tx" style="left:663.5px;top:582.4px;font-size:11.4px;line-height:1;color:#111;font-weight:bold;transform:scaleX(1.04);transform-origin:50% 0;width:0;display:flex;justify-content:center;"><span>TRecord</span></div>
<div class="a tx" style="left:616.7px;top:598.9px;font-size:11.5px;line-height:1;color:#111;">+</div>
<div class="a tx" style="left:625.6px;top:598.9px;font-size:11.5px;line-height:1;color:#111;">Name : string</div>
<div class="a tx" style="left:616.7px;top:616.0px;font-size:11.5px;line-height:1;color:#111;">+</div>
<div class="a tx" style="left:625.6px;top:616.0px;font-size:11.5px;line-height:1;color:#111;">Value : string</div>
<svg style="left:0;top:0" width="1080" height="810"><g stroke="#FF1A1A" stroke-width="1.1" fill="none"><path d="M475.3 341.4 L422.7 351.7 M434.6 342.3 L422.7 351.7 L436.5 356.2"/><path d="M620.5 413.5 L554.3 372.5 M560 383.8 L554.3 372.2 L567.9 372.5"/><path d="M569.4 451 L498.4 473.9 M495.2 466.4 L487 476.5 L498.4 473.9 Z" fill="#fff"/><path d="M304 466.4 L324 413.6 M314.3 422.7 L324 413.3 L326.7 426"/><path d="M423.2 497.8 L381 497.8 M393 491.2 L381 497.8 L393 504.6"/><path d="M487 517 L321 576.6 M317 570.3 L309.5 580.5 L321 576.6 Z" fill="#fff"/><path d="M413.2 606.7 L370.4 606.7 M383.4 600 L370.4 606.7 L383.4 614.3"/><path d="M611 611.6 L568.8 607 M582.2 602.2 L568.8 607 L580 616"/></g></svg>
</div></div>
<div class="a" style="left:650px;top:263px;width:400px;height:450px;background:#EDECE7;border:1px solid #2A5A92;border-radius:3px 3px 0 0"></div>
<div class="a" style="left:651px;top:264px;width:398px;height:22px;background:linear-gradient(#80B6F2 0,#3C8CEB 2px,#3D8DEA 4px,#4D95E8 12px,#5C9FEA 19px,#66A7EE 22px);border-radius:2px 2px 0 0"></div>
<svg style="left:656px;top:267px" width="18" height="18" viewBox="0 0 20 20"><g transform="translate(0.6,0.3) scale(0.9)"><circle cx="3" cy="3" r="2.3" fill="#FFE0D0" stroke="#E0202A" stroke-width="1.5"/><path d="M3 5.5 V10 M0.5 7.5 H5.5 M3 10 L1 13 M3 10 L5 12.5 M4.5 4.5 L12 11.5" stroke="#E02030" stroke-width="1.5" fill="none"/><ellipse cx="12" cy="14" rx="4.6" ry="2.8" fill="#FFF8D8" stroke="#F01828" stroke-width="1.7"/></g></svg>
<div class="a tx" style="left:774.9px;top:271.3px;font-size:10px;line-height:1;color:#fff;font-weight:bold;text-shadow:1px 1px 1px #2A4F7A">Asystent generowania kodu</div>
<div class="a" style="left:1013px;top:267.5px;width:14.5px;height:15px;background:#6CA8EF;border:1px solid #5B95DC;border-radius:3px"></div>
<div class="a" style="left:1030px;top:267.5px;width:14.5px;height:15px;background:#6CA8EF;border:1px solid #5B95DC;border-radius:3px"></div>
<svg style="left:1013px;top:267.5px" width="32" height="15"><rect x="3.8" y="4" width="6.8" height="6.5" fill="none" stroke="#1E3450" stroke-width="1.4"/><path d="M20.5 4 L27 10.5 M27 4 L20.5 10.5" stroke="#1E3450" stroke-width="1.5"/></svg>
<div class="a tx" style="left:660.5px;top:293.3px;font-size:9.5px;line-height:1;color:#000;">Stan generowania kodu</div>
<div class="a" style="left:660px;top:308.8px;width:382px;height:1px;background:#555"></div>
<div class="a" style="left:660px;top:309.8px;width:382px;height:1px;background:#fff"></div>
<div class="a tx" style="left:660.2px;top:317.8px;font-size:9.5px;line-height:1;color:#000;transform:scaleX(1.04);transform-origin:0 0;">Wciśnij przycisk Generowanie, aby rozpocząć generowanie kodu</div>
<div class="a" style="left:659.4px;top:345px;width:382.3px;height:326.5px;border:1px solid #A3A19A;border-radius:4px"></div>
<div class="a" style="left:664px;top:340px;width:83px;height:9px;background:#EDECE7"></div>
<div class="a tx" style="left:667.2px;top:340.6px;font-size:9.5px;line-height:1;color:#000;">Stan generowania</div>
<div class="a" style="left:677.8px;top:363px;width:345.8px;height:290.5px;background:#fff;border:1px solid #9C9A94;border-top-color:#8C8A84"></div>
<div class="a" style="left:678.8px;top:364px;width:343.8px;height:19.5px;background:linear-gradient(#F2F0EC,#E2DED6);border-bottom:1px solid #A8A59E"></div>
<div class="a" style="left:849.5px;top:364.5px;width:1.2px;height:18.5px;background:#B8B5AE"></div>
<div class="a tx" style="left:683.6px;top:367.6px;font-size:9.5px;line-height:1;color:#000;">Klasa</div>
<div class="a tx" style="left:855.1px;top:367.6px;font-size:9.5px;line-height:1;color:#000;">Stan generowania</div>
<div class="a" style="left:679.3px;top:383.2px;width:343px;height:15.2px;border:1px dotted #222"></div>
<div class="a tx" style="left:681.7px;top:386.4px;font-size:9.5px;line-height:1;color:#000;">TDatabase</div>
<div class="a tx" style="left:852.5px;top:386.4px;font-size:9.5px;line-height:1;color:#000;transform:scaleX(1.02);transform-origin:0 0;">Kod wygenerowany</div>
<div class="a tx" style="left:681.7px;top:402.4px;font-size:9.5px;line-height:1;color:#000;">TDataset</div>
<div class="a tx" style="left:852.5px;top:402.4px;font-size:9.5px;line-height:1;color:#000;transform:scaleX(1.02);transform-origin:0 0;">Kod wygenerowany</div>
<div class="a tx" style="left:681.7px;top:418.5px;font-size:9.5px;line-height:1;color:#000;">TField</div>
<div class="a tx" style="left:852.5px;top:418.5px;font-size:9.5px;line-height:1;color:#000;transform:scaleX(1.02);transform-origin:0 0;">Kod wygenerowany</div>
<div class="a tx" style="left:681.7px;top:434.6px;font-size:9.5px;line-height:1;color:#000;">TFieldItems</div>
<div class="a tx" style="left:852.5px;top:434.6px;font-size:9.5px;line-height:1;color:#000;transform:scaleX(1.02);transform-origin:0 0;">Kod wygenerowany</div>
<div class="a tx" style="left:681.7px;top:450.7px;font-size:9.5px;line-height:1;color:#000;">TQuery</div>
<div class="a tx" style="left:852.5px;top:450.7px;font-size:9.5px;line-height:1;color:#000;transform:scaleX(1.02);transform-origin:0 0;">Kod wygenerowany</div>
<div class="a tx" style="left:681.7px;top:466.8px;font-size:9.5px;line-height:1;color:#000;">TQueryItems</div>
<div class="a tx" style="left:852.5px;top:466.8px;font-size:9.5px;line-height:1;color:#000;transform:scaleX(1.02);transform-origin:0 0;">Kod wygenerowany</div>
<div class="a tx" style="left:681.7px;top:482.8px;font-size:9.5px;line-height:1;color:#000;">TRecord</div>
<div class="a tx" style="left:852.5px;top:482.8px;font-size:9.5px;line-height:1;color:#000;transform:scaleX(1.02);transform-origin:0 0;">Kod wygenerowany</div>
<div class="a tx" style="left:681.7px;top:498.9px;font-size:9.5px;line-height:1;color:#000;">TTable</div>
<div class="a tx" style="left:852.5px;top:498.9px;font-size:9.5px;line-height:1;color:#000;transform:scaleX(1.02);transform-origin:0 0;">Kod wygenerowany</div>
<div class="a tx" style="left:681.7px;top:515.0px;font-size:9.5px;line-height:1;color:#000;">TTableItems</div>
<div class="a tx" style="left:852.5px;top:515.0px;font-size:9.5px;line-height:1;color:#000;transform:scaleX(1.02);transform-origin:0 0;">Kod wygenerowany</div>
<div class="a" style="left:659.5px;top:677px;width:382.3px;height:1px;background:#555"></div>
<div class="a" style="left:659.5px;top:678px;width:382.3px;height:1px;background:#fff"></div>
<div class="a" style="left:659.3px;top:683.3px;width:58.30000000000007px;height:21px;background:linear-gradient(#F6F4F0,#E4E0D8);border:1px solid #9C9A94;border-radius:3px"></div>
<div class="a tx" style="left:688.5px;top:688.6px;font-size:9.5px;line-height:1;color:#111;width:0;display:flex;justify-content:center;"><span>Pomo<u>c</u></span></div>
<div class="a" style="left:824.4px;top:683.3px;width:79.30000000000007px;height:21px;background:linear-gradient(#F6F4F0,#E4E0D8);border:1px solid #C4C2BC;border-radius:3px"></div>
<div class="a tx" style="left:864.0px;top:688.6px;font-size:9.5px;line-height:1;color:#B4B2AC;width:0;display:flex;justify-content:center;"><span>&lt; <u>P</u>oprzedni</span></div>
<div class="a" style="left:914.2px;top:683.3px;width:57.39999999999998px;height:21px;background:linear-gradient(#F6F4F0,#E4E0D8);border:1px solid #9C9A94;border-radius:3px"></div>
<div class="a tx" style="left:942.9px;top:688.6px;font-size:9.5px;line-height:1;color:#111;width:0;display:flex;justify-content:center;"><span>Koniec</span></div>
<div class="a" style="left:988.2px;top:683.3px;width:53.299999999999955px;height:21px;background:linear-gradient(#F6F4F0,#E4E0D8);border:1px solid #C4C2BC;border-radius:3px"></div>
<div class="a tx" style="left:1014.9px;top:688.6px;font-size:9.5px;line-height:1;color:#B4B2AC;width:0;display:flex;justify-content:center;"><span><u>A</u>nuluj</span></div>
</body></html>
